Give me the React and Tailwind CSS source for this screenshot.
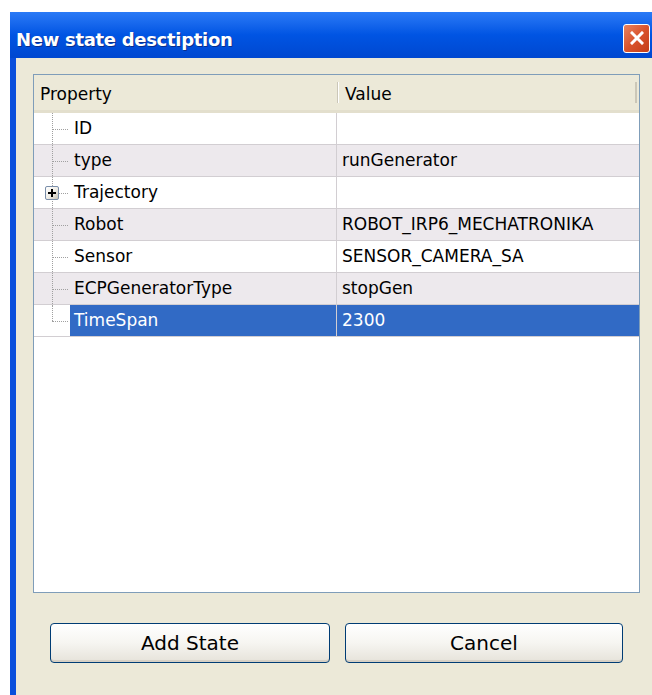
import React from "react";

const rows = [
  { name: "ID", value: "", alt: false },
  { name: "type", value: "runGenerator", alt: true },
  { name: "Trajectory", value: "", alt: false, expandable: true },
  { name: "Robot", value: "ROBOT_IRP6_MECHATRONIKA", alt: true },
  { name: "Sensor", value: "SENSOR_CAMERA_SA", alt: false },
  { name: "ECPGeneratorType", value: "stopGen", alt: true },
  { name: "TimeSpan", value: "2300", alt: false, selected: true },
];

function TreeGuide({ expandable, last }) {
  return (
    <div className="relative w-[36px] h-full shrink-0">
      {/* vertical dotted guide */}
      <div
        className={`absolute left-[18px] top-0 border-l border-dotted border-[#a0a0a0] ${
          last ? "h-[16px]" : "h-full"
        }`}
      />
      {/* horizontal dotted connector */}
      <div className="absolute left-[18px] top-[16px] w-[16px] border-t border-dotted border-[#a0a0a0]" />
      {expandable && (
        <div className="absolute left-[11px] top-[9px] w-[14px] h-[14px] border border-[#7a8ea9] bg-gradient-to-br from-white via-[#f0eee8] to-[#c9c4b6] rounded-[2px] flex items-center justify-center">
          <div className="relative w-[8px] h-[8px]">
            <div className="absolute left-0 top-[3px] w-[8px] h-[2px] bg-black" />
            <div className="absolute left-[3px] top-0 w-[2px] h-[8px] bg-black" />
          </div>
        </div>
      )}
    </div>
  );
}

function Row({ row, last }) {
  const bg = row.alt ? "bg-[#ede9ed]" : "bg-white";
  return (
    <div className={`flex h-[32px] border-b border-[#d2ced2] ${bg}`}>
      <div className="flex w-[303px] h-full border-r border-[#d2ced2]">
        <TreeGuide expandable={row.expandable} last={last} />
        <div
          className={`flex-1 flex items-center pl-[4px] pt-[1px] ${
            row.selected ? "bg-[#316ac5] text-white" : "text-black"
          }`}
        >
          {row.name}
        </div>
      </div>
      <div
        className={`flex-1 flex items-center pl-[5px] pt-[1px] ${
          row.selected ? "bg-[#316ac5] text-white" : "text-black"
        }`}
      >
        {row.value}
      </div>
    </div>
  );
}

function XpButton({ children, className }) {
  return (
    <button
      className={`h-[40px] rounded-[4px] border border-[#003c74] bg-gradient-to-b from-white via-[#f6f5f1] to-[#e6e3da] text-black text-[20px] shadow-[inset_0_-2px_0_#d6d0c5] ${className}`}
    >
      {children}
    </button>
  );
}

export default function App() {
  return (
    <div
      className="w-[652px] h-[695px] overflow-hidden bg-white pt-[12px] pl-[10px]"
      style={{ fontFamily: "'DejaVu Sans', sans-serif" }}
    >
      <div className="h-[683px] flex flex-col bg-[#0a4fdc]">
        {/* title bar */}
        <div className="h-[46px] shrink-0 flex items-center justify-between pl-[6px] pr-[2px] bg-gradient-to-b from-[#2a7af6] via-[#0054e3] to-[#0048d0]">
          <span
            className="text-white font-bold text-[18px] tracking-[-0.3px] pt-[8px]"
            style={{ textShadow: "1px 1px 0 #0a2e8c" }}
          >
            New state desctiption
          </span>
          <div className="mt-[6px] w-[27px] h-[29px] rounded-[3px] border border-white bg-gradient-to-br from-[#e9825e] via-[#d9532c] to-[#c43e18] flex items-center justify-center">
            <svg width="14" height="14" viewBox="0 0 14 14">
              <path
                d="M2 2 L12 12 M12 2 L2 12"
                stroke="white"
                strokeWidth="3"
                strokeLinecap="square"
              />
            </svg>
          </div>
        </div>

        {/* client area */}
        <div className="flex-1 ml-[6px] bg-[#ece9d8] pt-[16px] pl-[17px] pr-[12px] text-[17px]">
          <div className="h-[519px] border border-[#7f9db9] bg-white flex flex-col">
            {/* header */}
            <div className="flex h-[38px] shrink-0 bg-[#ece9d8] border-b-[3px] border-[#e3dfcd] text-black">
              <div className="w-[303px] flex items-center pl-[6px] pt-[5px]">Property</div>
              <div className="w-[2px] my-[7px] bg-[#cbc7b8] border-r border-white" />
              <div className="flex-1 flex items-center pl-[6px] pt-[5px]">Value</div>
              <div className="w-[2px] my-[7px] bg-[#cbc7b8] mr-[2px]" />
            </div>
            {rows.map((r, i) => (
              <Row key={r.name} row={r} last={i === rows.length - 1} />
            ))}
          </div>

          <div className="flex gap-[15px] mt-[30px] pl-[17px]">
            <XpButton className="w-[280px]">Add State</XpButton>
            <XpButton className="w-[278px]">Cancel</XpButton>
          </div>
        </div>
      </div>
    </div>
  );
}
